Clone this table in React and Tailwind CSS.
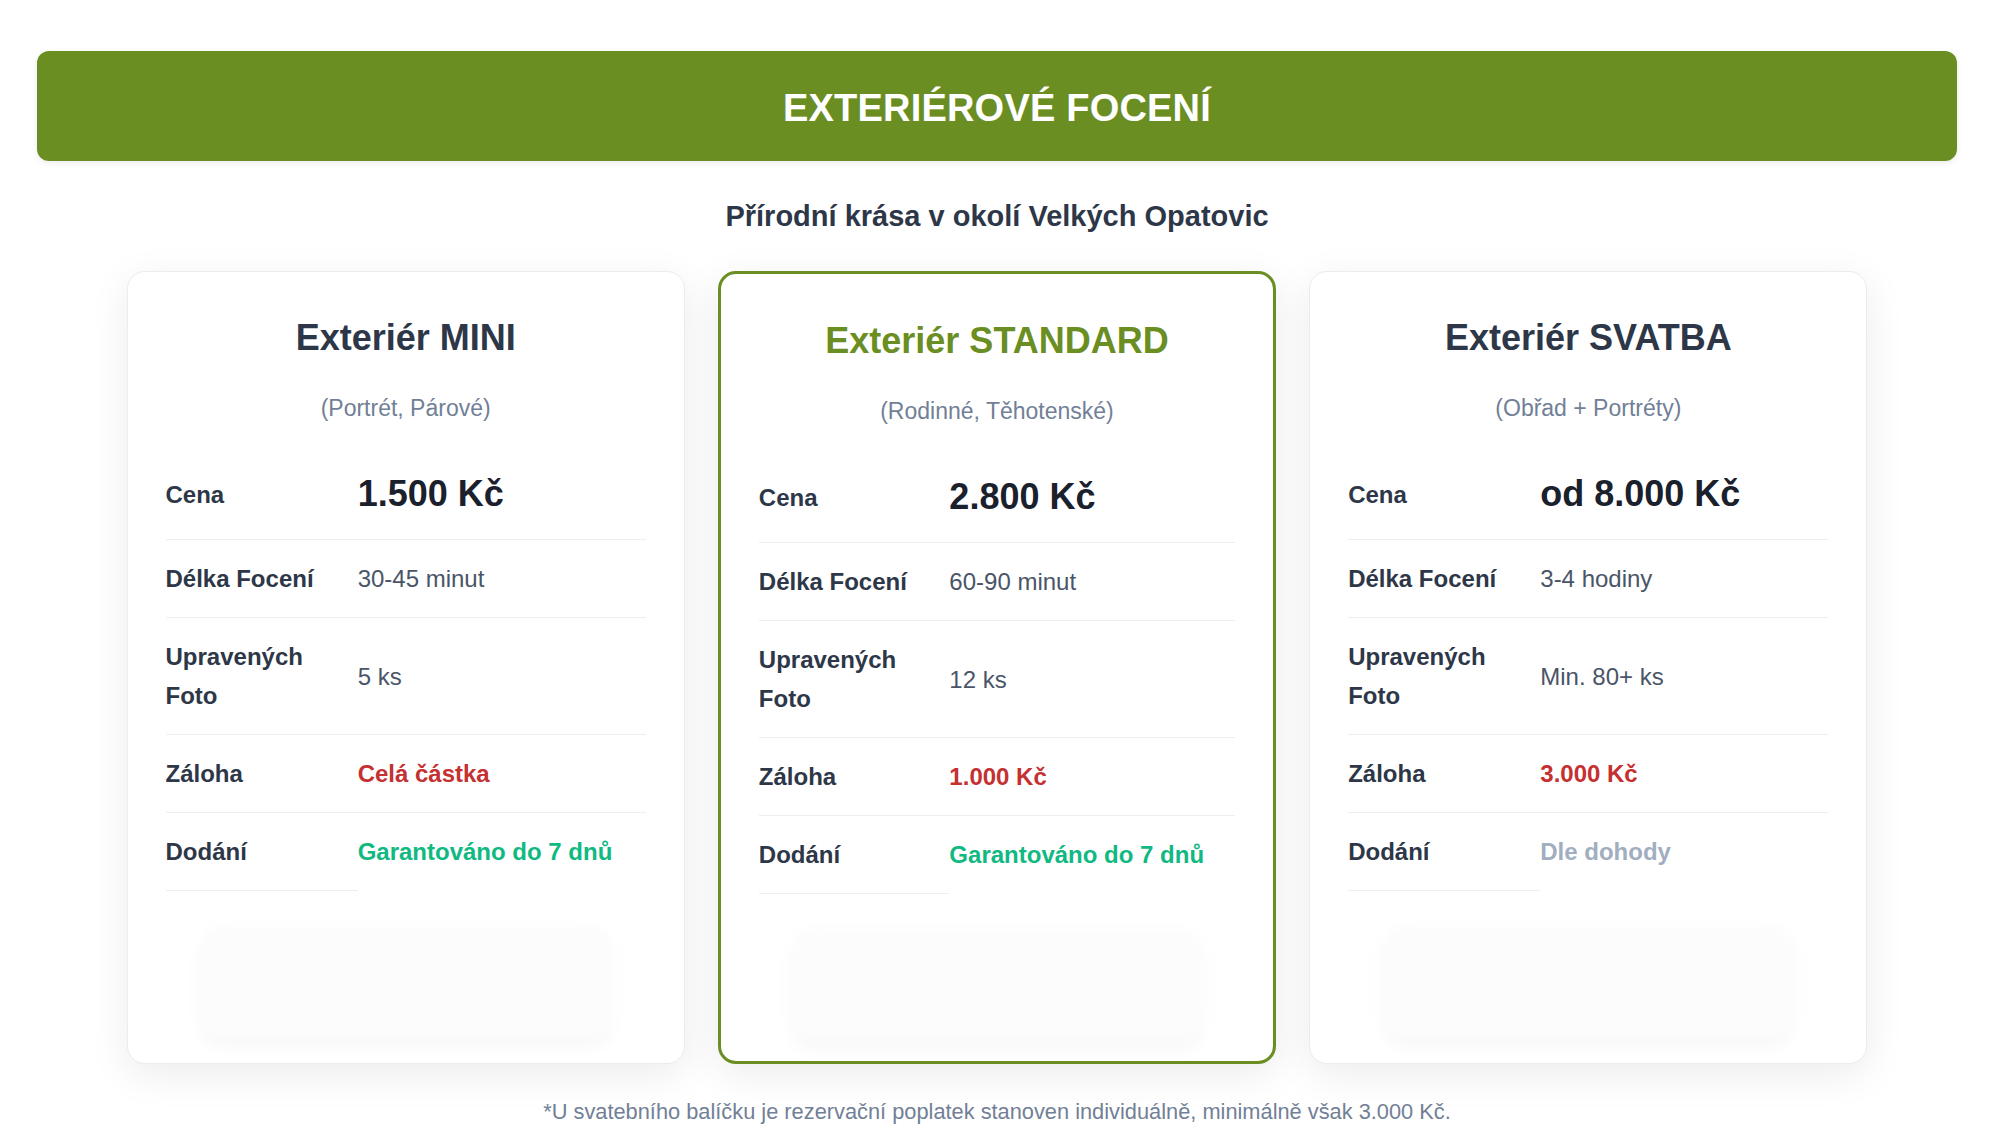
const packages = [
  {
    name: 'Exteriér MINI',
    sub: '(Portrét, Párové)',
    price: '1.500 Kč',
    length: '30-45 minut',
    photos: '5 ks',
    deposit: 'Celá částka',
    delivery: 'Garantováno do 7 dnů',
    deliveryClass: 'text-[#10b981]',
  },
  {
    name: 'Exteriér STANDARD',
    sub: '(Rodinné, Těhotenské)',
    price: '2.800 Kč',
    length: '60-90 minut',
    photos: '12 ks',
    deposit: '1.000 Kč',
    delivery: 'Garantováno do 7 dnů',
    deliveryClass: 'text-[#10b981]',
    featured: true,
  },
  {
    name: 'Exteriér SVATBA',
    sub: '(Obřad + Portréty)',
    price: 'od 8.000 Kč',
    length: '3-4 hodiny',
    photos: 'Min. 80+ ks',
    deposit: '3.000 Kč',
    delivery: 'Dle dohody',
    deliveryClass: 'text-[#a0aec0]',
  },
]

function PackageCard({ p }) {
  return (
    <div
      className={
        p.featured
          ? 'bg-white rounded-[18px] border-[3px] border-[#6b8e23] px-[38px] pt-[45px] pb-[21px] shadow-[0_10px_40px_rgba(0,0,0,0.08)]'
          : 'bg-white rounded-[18px] border border-[#ececec] px-[38px] pt-[44px] pb-[26px] shadow-[0_10px_40px_rgba(0,0,0,0.08)]'
      }
    >
      <h3
        className={
          'text-center font-bold text-[36px] leading-[44px] ' +
          (p.featured ? 'text-[#6b8e23]' : 'text-[#2d3748]')
        }
      >
        {p.name}
      </h3>
      <p className="text-center text-[23px] leading-[27px] text-[#718096] mt-[35px] mb-[27px]">
        {p.sub}
      </p>

      <table className="w-full border-collapse text-[24px] leading-[39px]">
        <tbody>
          <tr>
            <td className="w-[40%] py-[19px] border-b border-[#eceef1] font-bold text-[#2d3748] align-middle">
              Cena
            </td>
            <td className="py-[19px] border-b border-[#eceef1] font-bold text-[36px] leading-[52px] text-[#1a202c] align-middle">
              {p.price}
            </td>
          </tr>
          <tr>
            <td className="py-[19px] border-b border-[#eceef1] font-bold text-[#2d3748]">
              Délka Focení
            </td>
            <td className="py-[19px] border-b border-[#eceef1] text-[#4a5568]">
              {p.length}
            </td>
          </tr>
          <tr>
            <td className="py-[19px] border-b border-[#eceef1] font-bold text-[#2d3748]">
              Upravených
              <br />
              Foto
            </td>
            <td className="py-[19px] border-b border-[#eceef1] text-[#4a5568]">
              {p.photos}
            </td>
          </tr>
          <tr>
            <td className="py-[19px] border-b border-[#eceef1] font-bold text-[#2d3748]">
              Záloha
            </td>
            <td className="py-[19px] border-b border-[#eceef1] font-bold text-[#c53030]">
              {p.deposit}
            </td>
          </tr>
          <tr>
            <td className="py-[19px] border-b border-[#eceef1] font-bold text-[#2d3748]">
              Dodání
            </td>
            <td className={'py-[19px] font-bold ' + p.deliveryClass}>
              {p.delivery}
            </td>
          </tr>
        </tbody>
      </table>

      {/* blurred placeholder under the table */}
      <div className="mt-[34px] mx-auto w-[412px] h-[112px] rounded-[22px] bg-[#fcfcfc] blur-[5px] shadow-[0_10px_12px_rgba(0,0,0,0.03)]"></div>
    </div>
  )
}

export default function App() {
  return (
    <div className="min-h-screen bg-white font-['Liberation_Sans',Arial,sans-serif]">
      <div className="w-[1994px] px-[37px] pt-[51px] pb-[40px]">
        <div className="h-[110px] pt-[5px] rounded-[12px] bg-[#6b8e23] flex items-center justify-center shadow-[0_2px_6px_rgba(0,0,0,0.08)]">
          <h1 className="text-white font-bold text-[38px] tracking-[0.2px] uppercase">
            Exteriérové focení
          </h1>
        </div>

        <h2 className="text-center font-bold text-[29px] leading-[33px] text-[#2d3748] mt-[39px]">
          Přírodní krása v okolí Velkých Opatovic
        </h2>

        <div className="w-[1741px] mx-auto mt-[38px] grid grid-cols-3 gap-[33px]">
          {packages.map((p) => (
            <PackageCard key={p.name} p={p} />
          ))}
        </div>

        <p className="text-center text-[21.8px] leading-[25px] text-[#718096] mt-[35px]">
          *U svatebního balíčku je rezervační poplatek stanoven individuálně,
          minimálně však 3.000 Kč.
        </p>
      </div>
    </div>
  )
}
